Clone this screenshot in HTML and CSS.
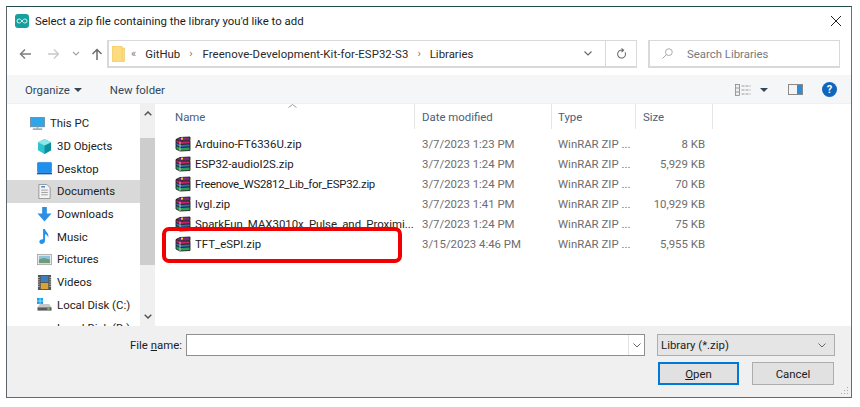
FILE: index.html
```html
<!DOCTYPE html>
<html lang="en">
<head>
<meta charset="utf-8">
<title>Select a zip file</title>
<link rel="stylesheet" href="styles.css">
</head>
<body>
<svg class="defs" width="0" height="0" aria-hidden="true">
  <symbol id="rar" viewBox="0 0 16 16">
    <path d="M5 1.500 L15 1 L15 4.500 L5 5 L1 3.500 Z" fill="#7b2a7d" stroke="#222" stroke-width=".9"/>
    <path d="M6 1.800 L8 1.600 L8 3.600 L6 3.800 Z" fill="#f0d040"/>
    <path d="M5 5.500 L15 5 L15 8 L5 8.500 L1 6.500 L1 3.500 Z" fill="#c9206c" stroke="#222" stroke-width=".9"/>
    <path d="M5 8.500 L15 8 L15 11 L5 11.500 L1 9.500 L1 6.500 Z" fill="#2f6fc4" stroke="#222" stroke-width=".9"/>
    <path d="M5 11.500 L15 11 L15 14.500 L5 15 L1 13 L1 9.500 Z" fill="#2d9e57" stroke="#222" stroke-width=".9"/>
    <path d="M5 5.500V15" stroke="#eee" stroke-width=".7"/>
  </symbol>
</svg>
<main class="window">
  <header class="titlebar">
    <svg class="app-icon" viewBox="0 0 14 14"><rect width="14" height="14" rx="3" fill="#14a09c"/><path d="M7 7c-1-1.500-2-2-3-2a2 2 0 0 0 0 4c1 0 2-.5 3-2s2-2 3-2a2 2 0 0 1 0 4c-1 0-2-.5-3-2Z" fill="none" stroke="#d9f3f2" stroke-width="1"/></svg>
    <span class="title">Select a zip file containing the library you'd like to add</span>
    <svg class="close" viewBox="0 0 10 10"><path d="M0 0L10 10M10 0L0 10" stroke="#222" stroke-width="1" fill="none"/></svg>
  </header>
  <nav class="navbar">
    <svg class="nav-arrow back" viewBox="0 0 12 12"><path d="M12 6H1.500M6 1.500L1.500 6L6 10.500" stroke="#7d7d7d" stroke-width="1.500" fill="none"/></svg>
    <svg class="nav-arrow fwd" viewBox="0 0 12 12"><path d="M0 6H10.500M6 1.500L10.500 6L6 10.500" stroke="#c9c9c9" stroke-width="1.300" fill="none"/></svg>
    <svg class="nav-chev" viewBox="0 0 8 5"><path d="M1 1L4 4L7 1" stroke="#a5a5a5" stroke-width="1.200" fill="none"/></svg>
    <svg class="nav-arrow up" viewBox="0 0 12 12"><path d="M6 12V1.500M1.500 6L6 1.500L10.500 6" stroke="#6d6d6d" stroke-width="1.500" fill="none"/></svg>
    <div class="address">
      <svg class="folder" viewBox="0 0 13 16"><path d="M0 0H10V2H12.500V15.500H0Z" fill="#fcdc7e" stroke="#e5c25f" stroke-width=".6"/><path d="M10 2V15.500" stroke="#eccb6a" stroke-width=".8"/></svg>
      <span class="crumb-more">«</span>
      <span class="crumb">GitHub</span><span class="sep">›</span>
      <span class="crumb long">Freenove-Development-Kit-for-ESP32-S3</span><span class="sep">›</span>
      <span class="crumb">Libraries</span>
      <svg class="addr-chev" viewBox="0 0 8 5"><path d="M.5 .5L4 4L7.500 .5" stroke="#666" stroke-width="1.100" fill="none"/></svg>
      <span class="refresh"><svg viewBox="0 0 12 12"><path d="M9.800 4A4.300 4.300 0 1 1 5 2H8" fill="none" stroke="#666" stroke-width="1.100"/><path d="M6 0L8.300 2L6 4" fill="none" stroke="#666" stroke-width="1.100"/></svg></span>
    </div>
    <div class="search">
      <svg viewBox="0 0 12 12"><circle cx="7.500" cy="4.500" r="3.700" fill="none" stroke="#9a9a9a" stroke-width=".9"/><path d="M4.800 7.200L.5 11.500" stroke="#9a9a9a" stroke-width="1"/></svg>
      <span>Search Libraries</span>
    </div>
  </nav>
  <div class="toolbar">
    <span class="tool">Organize <i class="caret"></i></span>
    <span class="tool newfolder">New folder</span>
    <span class="spacer"></span>
    <svg class="views" viewBox="0 0 16 12"><rect x=".5" y=".5" width="4" height="11" fill="#eee" stroke="#888" stroke-width=".8"/><path d="M0.500 4H4.500M0.500 8H4.500" stroke="#888" stroke-width=".8"/><path d="M6.500 2H15.500M6.500 6H15.500M6.500 10H15.500" stroke="#9a9a9a" stroke-width="1" stroke-dasharray="3 1"/></svg>
    <i class="caret views-caret"></i>
    <svg class="pane" viewBox="0 0 15 11"><rect x=".5" y=".5" width="14" height="10" fill="#f4f4f4" stroke="#8a8a8a"/><rect x="9" y="1" width="5" height="9" fill="#2a8ddb"/></svg>
    <span class="help">?</span>
  </div>
  <section class="content">
    <aside class="sidebar">
      <ul class="tree">
        <li class="top"><svg viewBox="0 0 16 14"><rect x=".5" y=".5" width="15" height="10" fill="#2ea6ea" stroke="#6c8296" stroke-width=".8"/><path d="M3 13H13" stroke="#8b9bab" stroke-width="1.500"/><path d="M8 10.500V13" stroke="#9fb0bf" stroke-width="1.500"/></svg>This PC</li>
        <li><svg viewBox="0 0 16 16"><path d="M8 0L15 3.500V12L8 16L1 12V3.500Z" fill="#2ec4cf"/><path d="M8 7L15 3.500V12L8 16Z" fill="#0f8f9e"/><path d="M8 7L1 3.500L8 0L15 3.500Z" fill="#8fe6ea"/></svg>3D Objects</li>
        <li><svg viewBox="0 0 16 14"><rect x=".5" y=".5" width="15" height="11" rx="1" fill="#1e90ee" stroke="#1470c0" stroke-width=".6"/><path d="M0 12.500H16" stroke="#0c5fae" stroke-width="1.500"/></svg>Desktop</li>
        <li class="selected"><svg viewBox="0 0 13 16"><path d="M.5 .5H9L12.500 4V15.500H.5Z" fill="#f4f4f4" stroke="#8c8c8c" stroke-width=".9"/><path d="M3 3H7" stroke="#2f80d0" stroke-width="1.500"/><path d="M3 6.500H10M3 9H10M3 11.500H10" stroke="#9a9a9a"/></svg>Documents</li>
        <li><svg viewBox="0 0 16 16"><path d="M5.500 0H10.500V7H15.500L8 15.500L.5 7H5.500Z" fill="#2e8fe2"/></svg>Downloads</li>
        <li><svg viewBox="0 0 12 16"><path d="M4.500 0H6.500C6.800 3 11 4 10 9C9.600 7 8 5.800 6.500 5.500V12.500C6.500 14.500 4.800 16 3 16C1.300 16 .5 15 .5 13.700C.5 12 2.300 10.800 4.500 11Z" fill="#1f93ee"/></svg>Music</li>
        <li><svg viewBox="0 0 16 12"><rect x=".5" y=".5" width="15" height="11" fill="#f2f2f2" stroke="#9a9a9a" stroke-width=".8"/><rect x="2" y="2" width="12" height="4" fill="#8fc2df"/><path d="M2 6L7 4.500L14 6V10H2Z" fill="#6f9a7c"/></svg>Pictures</li>
        <li><svg viewBox="0 0 14 16"><rect width="14" height="16" fill="#555"/><rect x="3" y="1" width="8" height="6.500" fill="#3d7fb8"/><rect x="3" y="8.500" width="8" height="6.500" fill="#d9a23a"/><path d="M1 2V14M13 2V14" stroke="#ddd" stroke-width="1.200" stroke-dasharray="1.200 1.200"/></svg>Videos</li>
        <li><svg viewBox="0 0 16 14"><rect x="0" y="0" width="3" height="3" fill="#19a5ee"/><rect x="3.500" y="0" width="3" height="3" fill="#19a5ee"/><rect x="0" y="3.500" width="3" height="3" fill="#19a5ee"/><rect x="3.500" y="3.500" width="3" height="3" fill="#19a5ee"/><path d="M3 6.500H13L15.500 10H.5Z" fill="#c6c6c6"/><rect x=".5" y="10" width="15" height="3.500" fill="#5a5a5a"/><rect x="11" y="11" width="2.500" height="1.500" fill="#6fe06f"/></svg>Local Disk (C:)</li>
        <li><svg viewBox="0 0 16 14"><path d="M3 6.500H13L15.500 10H.5Z" fill="#c6c6c6"/><rect x=".5" y="10" width="15" height="3.500" fill="#5a5a5a"/></svg>Local Disk (D:)</li>
      </ul>
    </aside>
    <div class="scrollbar">
      <svg class="sb-arrow" viewBox="0 0 8 5"><path d="M.7 4.300L4 1L7.300 4.300" stroke="#555" stroke-width="1.500" fill="none"/></svg>
      <div class="thumb"></div>
      <span class="spacer"></span>
      <svg class="sb-arrow" viewBox="0 0 8 5"><path d="M.7 .7L4 4L7.300 .7" stroke="#555" stroke-width="1.500" fill="none"/></svg>
    </div>
    <div class="files">
      <svg class="sort" viewBox="0 0 9 4"><path d="M.5 3.500L4.500 .5L8.500 3.500" stroke="#9a9a9a" fill="none"/></svg>
      <div class="head">
        <span class="h-name">Name</span>
        <span>Date modified</span>
        <span class="h-type">Type</span>
        <span>Size</span>
      </div>
      <div class="rows">
        <div class="row"><span class="name"><svg><use href="#rar"/></svg>Arduino-FT6336U.zip</span><span>3/7/2023 1:23 PM</span><span class="type">WinRAR ZIP ...</span><span class="size">8 KB</span></div>
        <div class="row"><span class="name"><svg><use href="#rar"/></svg>ESP32-audioI2S.zip</span><span>3/7/2023 1:24 PM</span><span class="type">WinRAR ZIP ...</span><span class="size">5,929 KB</span></div>
        <div class="row"><span class="name tight"><svg><use href="#rar"/></svg>Freenove_WS2812_Lib_for_ESP32.zip</span><span>3/7/2023 1:24 PM</span><span class="type">WinRAR ZIP ...</span><span class="size">70 KB</span></div>
        <div class="row"><span class="name"><svg><use href="#rar"/></svg>lvgl.zip</span><span>3/7/2023 1:41 PM</span><span class="type">WinRAR ZIP ...</span><span class="size">10,929 KB</span></div>
        <div class="row"><span class="name"><svg><use href="#rar"/></svg>SparkFun_MAX3010x_Pulse_and_Proximi...</span><span>3/7/2023 1:24 PM</span><span class="type">WinRAR ZIP ...</span><span class="size">75 KB</span></div>
        <div class="row"><span class="name"><svg><use href="#rar"/></svg>TFT_eSPI.zip</span><span>3/15/2023 4:46 PM</span><span class="type">WinRAR ZIP ...</span><span class="size">5,955 KB</span></div>
      </div>
      <div class="highlight"></div>
    </div>
  </section>
  <footer class="bottom">
    <div class="line">
      <label class="fn-label">File <u>n</u>ame:</label>
      <div class="fn-input"><span class="fn-drop"><svg viewBox="0 0 8 5"><path d="M.5 .5L4 4L7.500 .5" stroke="#666" fill="none"/></svg></span></div>
      <div class="filter"><span>Library (*.zip)</span><svg viewBox="0 0 8 5"><path d="M.5 .5L4 4L7.500 .5" stroke="#666" fill="none"/></svg></div>
    </div>
    <div class="line buttons">
      <button class="btn primary"><u>O</u>pen</button>
      <button class="btn">Cancel</button>
    </div>
    <svg class="grip" viewBox="0 0 9 9"><path d="M7 1h1v1H7zM4 4h1v1H4zM7 4h1v1H7zM1 7h1v1H1zM4 7h1v1H4zM7 7h1v1H7z" fill="#a8a8a8"/></svg>
  </footer>
</main>
</body>
</html>
```

FILE: styles.css
```css
* { box-sizing: border-box; }
html, body { margin: 0; height: 100%; background: #fff; overflow: hidden; }
body { font-family: Roboto, "Noto Sans", sans-serif; font-size: 11.4px; color: #222; padding: 6px 0 0 6px; }
svg { display: block; flex: none; }
.defs { position: absolute; }
.spacer { flex: 1; }
.window {
  width: 846px; height: 392px; display: flex; flex-direction: column; background: #fff;
  border: 1px solid #5f6468; border-top-color: #1f4d4d; border-right-color: #5f7078; border-bottom-color: #6a6a6a;
}
.titlebar { height: 29px; display: flex; align-items: center; padding: 0 10px 1px 8px; flex: none; }
.app-icon { width: 14px; height: 14px; margin-top: -1px; }
.title { margin-left: 6px; flex: 1; color: #1c1c1c; }
.close { width: 10px; height: 10px; margin-top: -1px; }
.navbar { height: 39px; display: flex; align-items: flex-start; padding: 4px 11px 0 12px; flex: none; }
.nav-arrow { width: 12px; height: 12px; margin-top: 8px; }
.fwd { margin-left: 17px; }
.nav-chev { width: 8px; height: 5px; margin: 11px 0 0 12px; }
.up { margin-left: 11px; }
.address {
  margin-left: 4px; width: 530px; height: 28px; display: flex; align-items: center;
  border: 1px solid #d9d9d9; border-width: 1px 1px 2px 2px; padding-left: 3px; color: #2a2a2a;
}
.folder { width: 13px; height: 16px; }
.crumb-more { margin-left: 6px; color: #777; font-size: 11px; }
.crumb { margin-left: 8px; }
.crumb-more + .crumb { margin-left: 9px; }
.crumb.long { margin-left: 9px; letter-spacing: .08px; }
.sep { margin-left: 9px; margin-right: 1px; color: #777; font-size: 11px; }
.addr-chev { width: 8px; height: 5px; margin-left: auto; margin-right: 13px; }
.refresh { width: 31px; height: 100%; border-left: 1px solid #d9d9d9; display: flex; align-items: center; justify-content: center; }
.refresh svg { width: 11px; height: 12px; }
.search {
  margin-left: 11px; width: 192px; height: 28px; display: flex; align-items: center; gap: 14px;
  border: 1px solid #d9d9d9; border-width: 1px 1px 2px 2px; padding-left: 12px; color: #7a7a7a;
}
.search svg { width: 11px; height: 11px; }
.toolbar { height: 28px; background: #f5f6f7; display: flex; align-items: center; padding: 1px 14px 0 18px; flex: none; color: #33475b; }
.tool { display: flex; align-items: center; }
.caret { display: inline-block; border: 4px solid transparent; border-top: 4px solid #33475b; border-bottom: 0; margin-left: 4px; }
.newfolder { margin-left: 28px; }
.views { width: 16px; height: 12px; }
.views-caret { margin-left: 9px; }
.pane { width: 15px; height: 11px; margin-left: 20px; }
.help { width: 15px; height: 15px; margin-left: 19px; border-radius: 50%; background: #0f66bd; color: #fff; font-weight: 700; font-size: 11px; line-height: 15px; text-align: center; }
.content { flex: 1; min-height: 0; display: flex; overflow: hidden; border-top: 1px solid #f0f0f0; }
.sidebar { width: 133px; overflow: hidden; flex: none; }
.tree { list-style: none; margin: 0; padding: 8px 0 0; }
.tree li { height: 22.7px; display: flex; align-items: center; gap: 5px; padding-left: 30px; white-space: nowrap; color: #222; }
.tree li.top { padding-left: 23px; gap: 5px; }
.tree li svg { width: 15px; height: 15px; }
.tree li.selected { background: #d9d9d9; }
.scrollbar { width: 15px; margin-right: 2px; background: #f0f0f0; display: flex; flex-direction: column; align-items: center; flex: none; }
.sb-arrow { width: 8px; height: 5px; margin: 7px 0; }
.thumb { width: 15px; height: 127px; background: #cdcdcd; margin-top: 15px; }
.files { flex: 1; position: relative; min-width: 0; }
.sort { position: absolute; left: 131px; top: 0; width: 9px; height: 4px; }
.head, .row { display: grid; grid-template-columns: 258px 137px 84px 77px; }
.head { height: 25px; align-items: center; color: #4c607a; }
.head span { padding: 1px 0 0 7px; height: 100%; display: flex; align-items: center; border-right: 1px solid #e5e5e5; }
.head .h-name { padding-left: 18px; }
.head .h-type { padding-left: 6px; }
.rows { padding-top: 5px; }
.row { height: 20px; align-items: center; color: #6d6d6d; white-space: nowrap; }
.row > span { padding-left: 7px; }
.row > .type { padding-left: 6px; }
.row .name { display: flex; align-items: center; gap: 4px; padding-left: 18px; color: #222; }
.row .name.tight { letter-spacing: -.3px; }
.row .name svg { width: 16px; height: 16px; margin-top: -1px; }
.row .size { text-align: right; padding: 0 8px 0 0; }
.highlight { position: absolute; left: 5px; top: 123px; width: 240px; height: 36px; border: 4px solid #f00000; border-radius: 7px; }
.bottom { height: 71px; background: #f0f0f0; padding: 8px 16px 0 0; position: relative; flex: none; }
.line { display: flex; align-items: flex-start; }
.fn-label { margin-left: 123px; width: 56px; height: 22px; line-height: 23px; color: #1c1c1c; white-space: nowrap; }
.fn-input { width: 459px; height: 22px; background: #fff; border: 1px solid #8f8f8f; display: flex; justify-content: flex-end; }
.fn-drop { width: 16px; display: flex; align-items: center; justify-content: center; border-left: 1px solid #e3e3e3; }
.fn-drop svg { width: 8px; height: 5px; }
.filter { margin-left: 12px; width: 178px; height: 22px; background: #e5e5e5; border: 1px solid #adadad; display: flex; align-items: center; justify-content: space-between; padding: 0 8px 0 3px; }
.filter svg { width: 8px; height: 5px; }
.buttons { gap: 13px; margin: 6px 0 0 651px; }
.btn { width: 82px; height: 23px; padding: 0; background: #e1e1e1; border: 1px solid #adadad; font: inherit; color: #1c1c1c; }
.btn.primary { width: 81px; border: 2px solid #0078d7; }
.grip { position: absolute; right: 2px; bottom: 2px; width: 9px; height: 9px; }
```
